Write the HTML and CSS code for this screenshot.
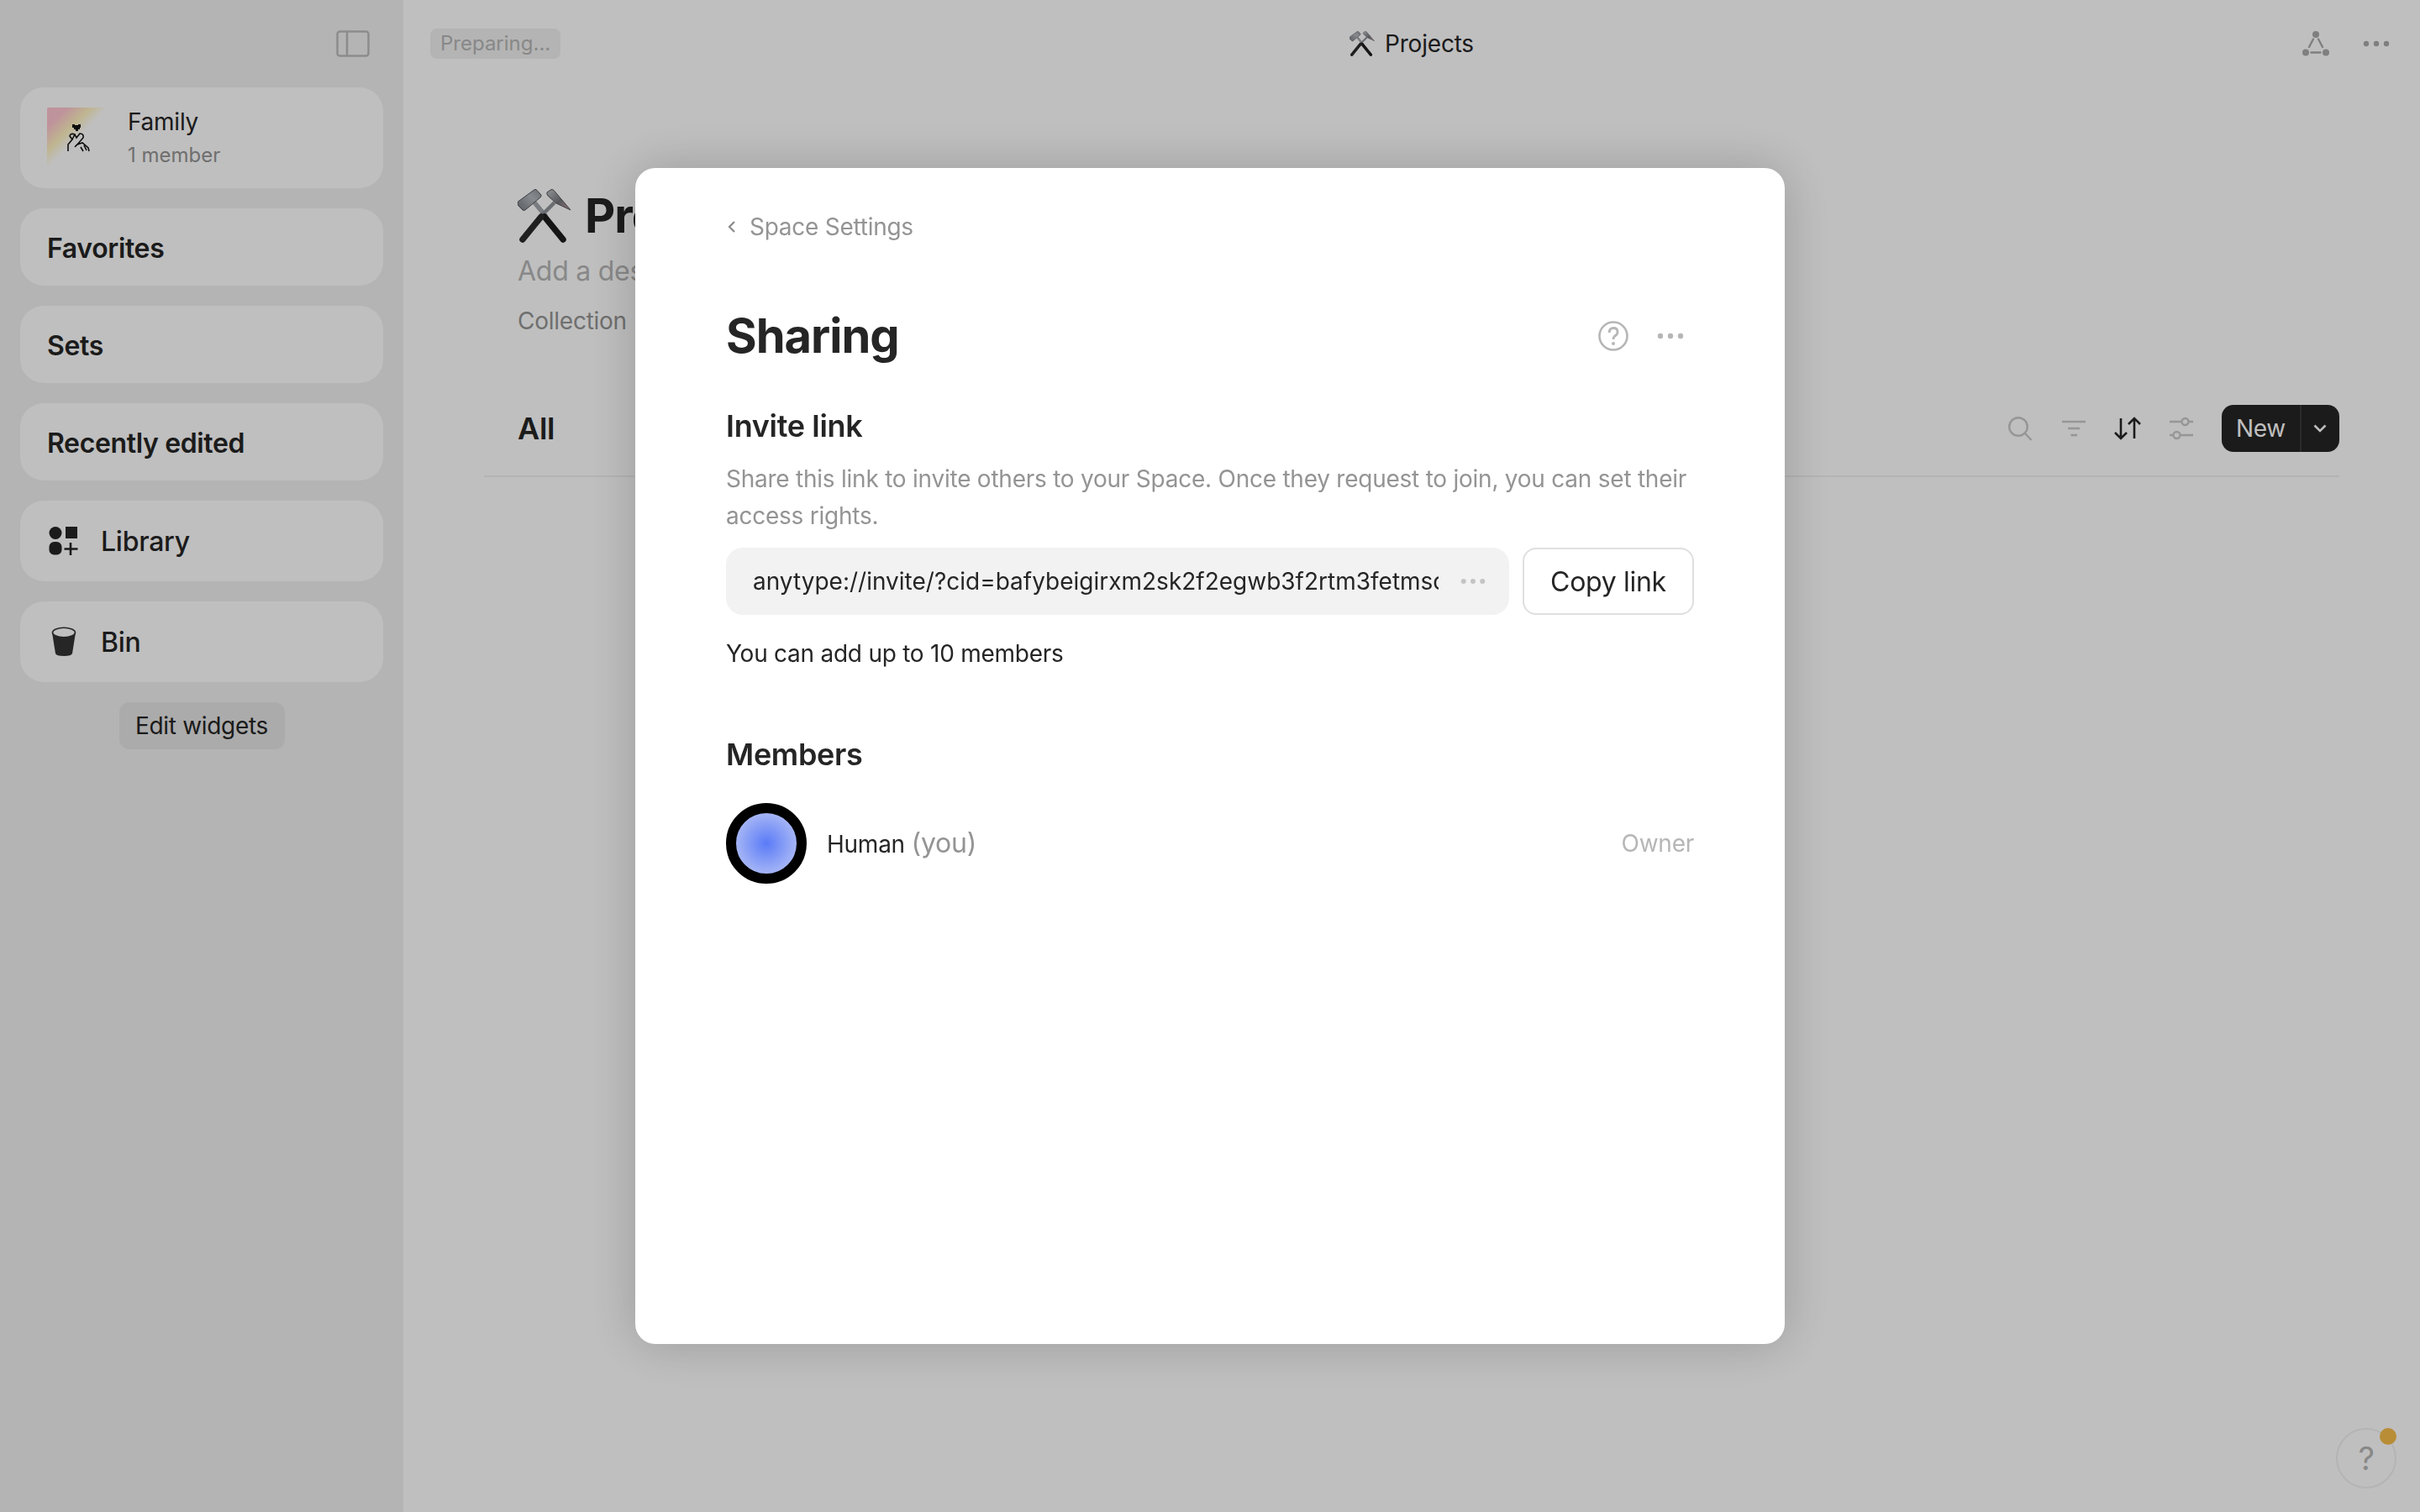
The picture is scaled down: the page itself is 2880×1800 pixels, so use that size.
FILE: index.html
```html
<!DOCTYPE html>
<html lang="en">
<head>
    <meta charset="UTF-8">
    <title>Sharing</title>
    <link rel="stylesheet" href="styles.css">
</head>
<body>

    <svg class="defs" width="0" height="0">
        <defs>
            <linearGradient id="steel" x1="0" y1="1" x2="1" y2="0">
                <stop offset="0" stop-color="#777c82"/>
                <stop offset="0.6" stop-color="#b4b8bd"/>
                <stop offset="1" stop-color="#8e9298"/>
            </linearGradient>
            <linearGradient id="pick" x1="0" y1="0" x2="1" y2="1">
                <stop offset="0" stop-color="#c4c7cb"/>
                <stop offset="0.55" stop-color="#74767b"/>
                <stop offset="1" stop-color="#c79da2"/>
            </linearGradient>
            <symbol id="hammers" viewBox="0 0 64 64">
                <!-- metal part of the handles, above the cross -->
                <path d="M20 16 L34 33" stroke="#a2a6ab" stroke-width="5.5"/>
                <path d="M44 16 L26 34" stroke="#8e9297" stroke-width="4.5"/>
                <!-- black grips -->
                <path d="M32 33 L54 60" stroke="#1d1d1d" stroke-width="7.5" stroke-linecap="round"/>
                <path d="M28 33 L6 60" stroke="#2a2a2a" stroke-width="7.5" stroke-linecap="round"/>
                <!-- heads -->
                <path d="M0.5 15 L20 0.8 Q22 0 23 1.5 L28 7 Q28.5 8.5 27 10 L9 25 Q7.5 26 6 25 L1 20 Q0 18 0.5 15 Z" fill="url(#steel)" stroke="#4e5257" stroke-width="1"/>
                <path d="M35 4 L40 0.6 Q41.5 0 43 1.5 L63 25 L46 17 L36 8 Q34.5 6 35 4 Z" fill="url(#pick)" stroke="#4e5257" stroke-width="1"/>
            </symbol>
            <symbol id="dots" viewBox="0 0 32 8">
                <circle cx="4" cy="4" r="3.2"/>
                <circle cx="16" cy="4" r="3.2"/>
                <circle cx="28" cy="4" r="3.2"/>
            </symbol>
        </defs>
    </svg>

    <div class="app">
        <aside class="sidebar">
            <div class="side-top">
                <svg width="40" height="32" viewBox="0 0 40 32" fill="none" stroke="#bbb" stroke-width="2.5">
                    <rect x="1.5" y="1.5" width="37" height="29" rx="3"/>
                    <path d="M13 1.5 V30.5"/>
                </svg>
            </div>

            <div class="widget space-card">
                <div class="space-icon">
                    <svg width="72" height="72" viewBox="0 0 72 72" fill="none" stroke="#111" stroke-width="1.6">
                        <path d="M30 20 h3 v1 h4 v-1 h3 v4 h-1 v2 h-2 v2 h-3 v-2 h-2 v-2 h-2 z" fill="#111" stroke="none"/>
                        <path d="M25 52 V44 L30 38 L27 34 Q28 30 33 32 L35 36 L39 31 Q44 31 43 36 L36 44 L42 42 L49 48 L50 52"/>
                        <path d="M33 32 L30 38 M36 44 L33 47 M40 47 L43 52 M44 45 L47 51"/>
                    </svg>
                </div>
                <div class="space-text">
                    <div class="space-name">Family</div>
                    <div class="space-count">1 member</div>
                </div>
            </div>

            <div class="widget widget-head">Favorites</div>
            <div class="widget widget-head">Sets</div>
            <div class="widget widget-head">Recently edited</div>

            <div class="widget widget-link">
                <svg width="36" height="36" viewBox="0 0 36 36" fill="#252525">
                    <ellipse cx="8" cy="8.5" rx="7.5" ry="7.5"/>
                    <rect x="20" y="1" width="14" height="14"/>
                    <rect x="0.5" y="19" width="15" height="15.5" rx="6"/>
                    <path d="M26 20 V35 M18.5 27.5 H34.5" stroke="#252525" stroke-width="2.6" fill="none"/>
                </svg>
                <span>Library</span>
            </div>
            <div class="widget widget-link">
                <svg width="36" height="36" viewBox="0 0 36 36">
                    <path d="M4 7 L8 32 Q9 35 18 35 Q27 35 28 32 L32 7 Z" fill="#333"/>
                    <ellipse cx="18" cy="7" rx="13.5" ry="5.8" fill="#fff" stroke="#333" stroke-width="1.6"/>
                </svg>
                <span>Bin</span>
            </div>

            <button class="edit-widgets">Edit widgets</button>
        </aside>

        <main class="content">
            <header class="topbar">
                <div class="topbar-left"><span class="sync-badge">Preparing...</span></div>
                <div class="topbar-title">
                    <svg width="30" height="30"><use href="#hammers"/></svg>
                    <span>Projects</span>
                </div>
                <div class="topbar-right">
                    <svg width="32" height="30" viewBox="0 0 32 30" fill="#aaa" stroke="none">
                        <circle cx="16" cy="4" r="4"/>
                        <circle cx="4" cy="25.5" r="4"/>
                        <circle cx="28" cy="25.5" r="4"/>
                        <path d="M13 9.5 L8 19 M19 9.5 L24 19 M10.5 25.5 H21.5" stroke="#aaa" stroke-width="2.4" stroke-linecap="round"/>
                    </svg>
                    <svg width="32" height="8" fill="#aaa"><use href="#dots"/></svg>
                </div>
            </header>

            <section class="page">
                <div class="page-title">
                    <svg width="64" height="64"><use href="#hammers"/></svg>
                    <h1>Projects</h1>
                </div>
                <div class="page-desc">Add a description</div>
                <div class="page-type">Collection</div>

                <div class="view-bar">
                    <div class="view-name">All</div>
                    <div class="view-tools">
                        <svg class="search-icon" width="28" height="30" viewBox="0 0 28 30" fill="none" stroke="#c8c8c8" stroke-width="2.4">
                            <circle cx="12" cy="13" r="10.8"/>
                            <path d="M20 21 L27.5 29"/>
                        </svg>
                        <svg width="28" height="30" viewBox="0 0 28 30" fill="none" stroke="#c8c8c8" stroke-width="2.6">
                            <path d="M0 7 H28 M7 15 H21 M10.5 23 H18"/>
                        </svg>
                        <svg width="32" height="30" viewBox="0 0 32 30" fill="none" stroke="#252525" stroke-width="2.6">
                            <path d="M8 3 V27 M1 20 L8 27 L15 20"/>
                            <path d="M24 27 V3 M17 10 L24 3 L31 10"/>
                        </svg>
                        <svg width="28" height="30" viewBox="0 0 28 30" fill="none" stroke="#c8c8c8" stroke-width="2.4">
                            <path d="M0 7 H14 M23 7 H28 M0 23 H4 M13 23 H28"/>
                            <circle cx="18.5" cy="7" r="4"/>
                            <circle cx="8.5" cy="23" r="4"/>
                        </svg>
                        <div class="new-btn">
                            <span class="new-label">New</span>
                            <span class="new-arrow">
                                <svg width="16" height="10" viewBox="0 0 16 10" fill="none" stroke="#fff" stroke-width="2.6">
                                    <path d="M1.5 1.5 L8 8 L14.5 1.5"/>
                                </svg>
                            </span>
                        </div>
                    </div>
                </div>
            </section>

            <div class="help-btn">?<span class="help-dot"></span></div>
        </main>
    </div>

    <div class="dimmer">
        <div class="modal">
            <div class="back-link">
                <svg width="12" height="18" viewBox="0 0 12 18" fill="none" stroke="#8a8a8a" stroke-width="2.2">
                    <path d="M10 3 L4 9 L10 15"/>
                </svg>
                <span>Space Settings</span>
            </div>

            <div class="modal-title">
                <h2>Sharing</h2>
                <div class="title-icons">
                    <svg width="36" height="36" viewBox="0 0 36 36">
                        <circle cx="18" cy="18" r="16.5" fill="none" stroke="#b6b6b6" stroke-width="2.6"/>
                        <path d="M13 14 Q13.5 8.5 18 8.5 Q23 8.5 23 13 Q23 16 20.5 17.5 Q18 19 18 22" fill="none" stroke="#b6b6b6" stroke-width="2.8"/>
                        <circle cx="18" cy="27" r="2" fill="#b6b6b6"/>
                    </svg>
                    <svg width="32" height="8" fill="#b6b6b6"><use href="#dots"/></svg>
                </div>
            </div>

            <h3>Invite link</h3>
            <p class="hint">Share this link to invite others to your Space. Once they request to join, you can set their access rights.</p>

            <div class="invite-row">
                <div class="invite-input">
                    <div class="invite-url">anytype://invite/?cid=bafybeigirxm2sk2f2egwb3f2rtm3fetmsckx</div>
                    <svg width="30" height="8" fill="#c4c4c4"><use href="#dots"/></svg>
                </div>
                <button class="copy-btn">Copy link</button>
            </div>

            <p class="limit">You can add up to 10 members</p>

            <h3 class="members-head">Members</h3>
            <div class="member">
                <div class="avatar"></div>
                <div class="member-name">Human <span class="you">(you)</span></div>
                <div class="member-role">Owner</div>
            </div>
        </div>
    </div>

</body>
</html>
```

FILE: styles.css
```css
/* Page */
html, body {
    margin: 0;
    height: 100%;
}

body {
    font-family: 'Inter', 'Liberation Sans', sans-serif;
    color: #252525;
    overflow: hidden;
    letter-spacing: -0.25px;
}

.defs {
    display: block;
}

.app {
    display: flex;
    height: 1800px;
    background: #fff;
}

/* Sidebar */
.sidebar {
    width: 480px;
    flex-shrink: 0;
    box-sizing: border-box;
    padding: 36px 24px 0;
    background: #f0f0f0;
    display: flex;
    flex-direction: column;
    gap: 24px;
}

.side-top {
    height: 44px;
    display: flex;
    justify-content: flex-end;
    padding-right: 16px;
}

.widget {
    background: #fff;
    border-radius: 28px;
    box-sizing: border-box;
    padding: 0 32px;
    display: flex;
    align-items: center;
}

.space-card {
    height: 120px;
    gap: 24px;
}

.space-icon {
    width: 72px;
    height: 72px;
    background: linear-gradient(135deg, #ffc4d0 0%, #ffc4d0 16%, #fff2c0 36%, #ffffff 50%);
    border-radius: 2px;
}

.space-name {
    font-size: 28px;
    line-height: 40px;
}

.space-count {
    margin-top: 2px;
    font-size: 24px;
    line-height: 36px;
    color: #949494;
    letter-spacing: 0;
}

.widget-head {
    height: 92px;
    padding-top: 2px;
    font-size: 32px;
    font-weight: 600;
    letter-spacing: -0.36px;
}

.widget-link {
    height: 96px;
    gap: 28px;
    font-size: 32px;
    font-weight: 500;
}

.widget-link svg {
    margin-left: 2px;
    margin-right: -2px;
}

.edit-widgets {
    align-self: center;
    height: 56px;
    width: 197px;
    border: none;
    border-radius: 12px;
    background: #e4e4e4;
    color: #252525;
    font-family: inherit;
    font-size: 28px;
    letter-spacing: -0.3px;
    padding: 0;
}

/* Main area */
.content {
    flex: 1;
    position: relative;
}

.topbar {
    height: 104px;
    box-sizing: border-box;
    padding: 0 36px 0 32px;
    display: grid;
    grid-template-columns: 1fr auto 1fr;
    align-items: center;
}

.sync-badge {
    display: inline-block;
    height: 36px;
    line-height: 36px;
    padding: 0 12px;
    border-radius: 8px;
    background: #f0f0f0;
    color: #b6b6b6;
    font-size: 24px;
    letter-spacing: 0;
}

.topbar-title {
    display: flex;
    align-items: center;
    gap: 12px;
    margin-left: 4px;
    font-size: 28px;
    letter-spacing: -0.2px;
}

.topbar-right {
    display: flex;
    justify-content: flex-end;
    align-items: center;
    gap: 40px;
}

.page {
    padding: 121px 96px 0 136px;
}

.page-title {
    display: flex;
    align-items: center;
    gap: 16px;
    height: 64px;
}

h1 {
    margin: 0;
    font-size: 56px;
    font-weight: 700;
    letter-spacing: -1px;
}

.page-desc {
    margin-top: 12px;
    font-size: 32px;
    line-height: 44px;
    color: #b6b6b6;
}

.page-type {
    margin-top: 15px;
    font-size: 28px;
    line-height: 44px;
    color: #949494;
}

.view-bar {
    margin: 78px 0 0 -40px;
    padding: 0 0 28px 40px;
    height: 56px;
    border-bottom: 2px solid #f0f0f0;
    display: flex;
    justify-content: space-between;
    align-items: center;
}

.view-name {
    font-size: 36px;
    font-weight: 600;
}

.view-tools {
    display: flex;
    align-items: center;
    gap: 34px;
}

.search-icon {
    margin-right: 2px;
}

.new-btn {
    display: flex;
    height: 56px;
    border-radius: 14px;
    background: #252525;
    color: #fff;
    font-size: 28px;
    align-items: center;
}

.new-label {
    width: 93px;
    text-align: center;
    line-height: 56px;
    border-right: 2px solid #3a3a3a;
}

.new-arrow {
    width: 43px;
    padding-right: 2px;
    display: flex;
    justify-content: center;
}

.help-btn {
    position: absolute;
    right: 28px;
    bottom: 28px;
    width: 72px;
    height: 72px;
    box-sizing: border-box;
    border: 2px solid #f0f0f0;
    border-radius: 50%;
    display: flex;
    align-items: center;
    justify-content: center;
    font-size: 38px;
    color: #b6b6b6;
}

.help-dot {
    position: absolute;
    top: -2px;
    right: -2px;
    width: 20px;
    height: 20px;
    border-radius: 50%;
    background: #f6bc49;
}

/* Modal */
.dimmer {
    position: fixed;
    inset: 0;
    background: rgba(0, 0, 0, 0.25);
    display: flex;
    align-items: center;
    justify-content: center;
}

.modal {
    width: 1368px;
    height: 1400px;
    box-sizing: border-box;
    padding: 50px 108px 0;
    background: #fff;
    border-radius: 24px;
    box-shadow: 0 0 60px rgba(0, 0, 0, 0.2);
}

.back-link {
    display: flex;
    align-items: center;
    gap: 16px;
    height: 40px;
    font-size: 28px;
    color: #949494;
    letter-spacing: -0.26px;
}

.modal-title {
    margin-top: 74px;
    height: 72px;
    display: flex;
    align-items: center;
    justify-content: space-between;
}

h2 {
    margin: 0;
    font-size: 56px;
    font-weight: 700;
    letter-spacing: -1px;
}

.title-icons {
    display: flex;
    align-items: center;
    gap: 34px;
    padding-right: 12px;
}

h3 {
    margin: 49px 0 0;
    font-size: 36px;
    line-height: 44px;
    font-weight: 600;
    letter-spacing: -0.33px;
}

.hint {
    margin: 19px 0 0;
    font-size: 28px;
    line-height: 44px;
    color: #949494;
    letter-spacing: -0.24px;
}

.invite-row {
    margin-top: 16px;
    display: flex;
    gap: 16px;
    height: 80px;
}

.invite-input {
    width: 932px;
    box-sizing: border-box;
    padding: 0 28px 0 32px;
    background: #f2f2f2;
    border-radius: 20px;
    display: flex;
    align-items: center;
    gap: 26px;
}

.invite-url {
    flex: 1;
    overflow: hidden;
    white-space: nowrap;
    font-size: 28px;
    letter-spacing: 0;
}

.copy-btn {
    flex: 1;
    background: #fff;
    border: 2px solid #dfdfdf;
    border-radius: 16px;
    color: #252525;
    font-family: inherit;
    font-size: 32px;
    letter-spacing: -0.3px;
    padding: 0;
}

.limit {
    margin: 24px 0 0;
    font-size: 28px;
    line-height: 44px;
}

.members-head {
    margin-top: 76px;
}

.member {
    margin-top: 36px;
    display: flex;
    align-items: center;
    gap: 24px;
}

.avatar {
    width: 96px;
    height: 96px;
    box-sizing: border-box;
    border: 12px solid #000;
    border-radius: 50%;
    background: radial-gradient(circle, #5a7bf7 0%, #c3ccf5 100%);
}

.member-name {
    flex: 1;
    margin-bottom: 2px;
    font-size: 28px;
}

.you {
    font-size: 32px;
    color: #949494;
}

.member-role {
    font-size: 28px;
    color: #b6b6b6;
}
```
